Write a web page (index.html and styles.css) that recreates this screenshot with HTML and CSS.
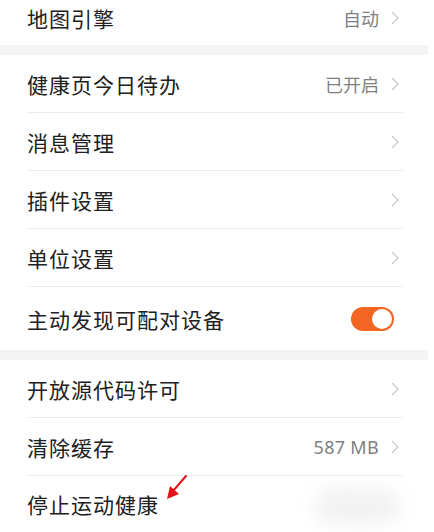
FILE: index.html
```html
<!DOCTYPE html>
<html>
<head>
<meta charset="utf-8">
<link rel="stylesheet" href="styles.css">
</head>
<body>
<div class="page">
	<div class="group first">
		<div class="row last">
			<span class="label">地图引擎</span>
			<span class="value">自动</span>
			<svg class="chev" width="8" height="14" viewBox="0 0 8 14"><polyline points="1,1 7,7 1,13"/></svg>
		</div>
	</div>
	<div class="gap"></div>
	<div class="group">
		<div class="row">
			<span class="label">健康页今日待办</span>
			<span class="value">已开启</span>
			<svg class="chev" width="8" height="14" viewBox="0 0 8 14"><polyline points="1,1 7,7 1,13"/></svg>
		</div>
		<div class="row">
			<span class="label">消息管理</span>
			<svg class="chev" width="8" height="14" viewBox="0 0 8 14"><polyline points="1,1 7,7 1,13"/></svg>
		</div>
		<div class="row">
			<span class="label">插件设置</span>
			<svg class="chev" width="8" height="14" viewBox="0 0 8 14"><polyline points="1,1 7,7 1,13"/></svg>
		</div>
		<div class="row">
			<span class="label">单位设置</span>
			<svg class="chev" width="8" height="14" viewBox="0 0 8 14"><polyline points="1,1 7,7 1,13"/></svg>
		</div>
		<div class="row last tall">
			<span class="label">主动发现可配对设备</span>
			<span class="switch on"><span class="knob"></span></span>
		</div>
	</div>
	<div class="gap"></div>
	<div class="group">
		<div class="row">
			<span class="label">开放源代码许可</span>
			<svg class="chev" width="8" height="14" viewBox="0 0 8 14"><polyline points="1,1 7,7 1,13"/></svg>
		</div>
		<div class="row">
			<span class="label">清除缓存</span>
			<span class="value latin">587 MB</span>
			<svg class="chev" width="8" height="14" viewBox="0 0 8 14"><polyline points="1,1 7,7 1,13"/></svg>
		</div>
		<div class="row last">
			<span class="label">停止运动健康</span>
		</div>
	</div>
</div>
<div class="smudge"></div>
<svg class="arrow" width="30" height="32" viewBox="0 0 30 32">
	<line x1="26" y1="4" x2="13" y2="19" stroke="#e3151b" stroke-width="2" stroke-linecap="round"/>
	<polygon points="7,27 10,14 19,22" fill="#e3151b"/>
</svg>
</body>
</html>
```
FILE: styles.css
```css
body {
	margin: 0;
	background: #fff;
	font-family: "Noto Sans", "Noto Sans CJK SC", sans-serif;
	position: relative;
	overflow: hidden;
	height: 532px;
}
.page {
	width: 434px;
}
.first {
	margin-top: -10px;
}
.gap {
	height: 10px;
	background: #f4f4f4;
	margin-right: 6px;
}
.row {
	display: flex;
	align-items: center;
	height: 57px;
	margin: 0 31px 0 27px;
	padding-right: 4px;
	border-bottom: 1px solid #ececec;
}
.row.last {
	border-bottom: none;
	height: 55px;
}
.row.tall {
	height: 63px;
}
.label {
	flex: 1;
	font-size: 21px;
	letter-spacing: 1px;
	color: #202020;
}
.value {
	font-size: 18px;
	color: #7f7f7f;
	margin-right: 12px;
}
.value.latin {
	font-family: "Noto Sans", sans-serif;
	letter-spacing: 0.3px;
}
.chev polyline {
	fill: none;
	stroke: #cacaca;
	stroke-width: 1.3;
}
.switch {
	width: 43px;
	height: 24px;
	border-radius: 12px;
	background: #f26522;
	margin-right: 5px;
	display: flex;
	align-items: center;
	justify-content: flex-end;
	padding: 0 2px;
	box-sizing: border-box;
}
.knob {
	width: 20px;
	height: 20px;
	border-radius: 50%;
	background: #fff;
}
.smudge {
	position: absolute;
	left: 315px;
	top: 488px;
	width: 85px;
	height: 36px;
	background: #ececec;
	border-radius: 20px;
	filter: blur(9px);
	opacity: 0.7;
}
.arrow {
	position: absolute;
	left: 160px;
	top: 472px;
}
```
